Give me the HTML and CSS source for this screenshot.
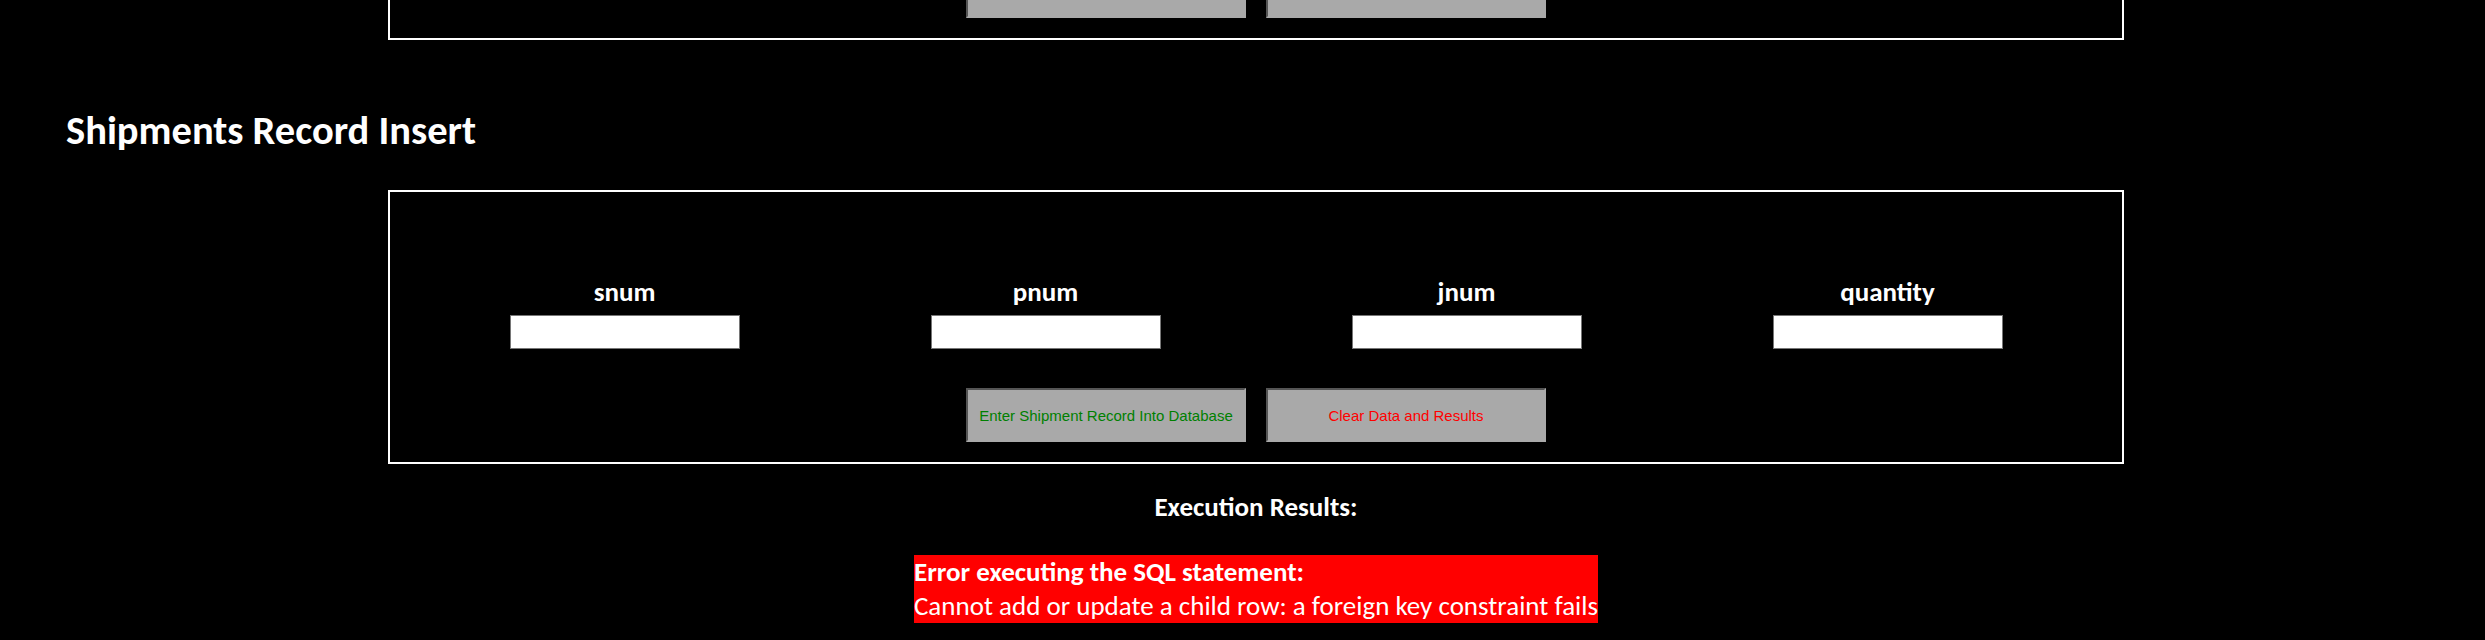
FILE: index.html
```html
<!DOCTYPE html>
<html lang="en">
  <head>
    <meta charset="UTF-8" />
    <meta name="viewport" content="width=device-width, initial-scale=1.0" />
    <title>Project 3 - Shipments Record Insert</title>
    <link rel="stylesheet" href="styles.css">
  </head>
  <body>
    <div class="page">
      <!-- previous form, scrolled mostly out of view -->
      <div class="panel panel-prev">
        <div class="actions">
          <button type="button" class="btn btn-submit" aria-label="Enter Part Record Into Database"></button>
          <button type="button" class="btn btn-clear" aria-label="Clear Data and Results"></button>
        </div>
      </div>

      <h1>Shipments Record Insert</h1>

      <form class="panel" action="#" method="post">
        <div class="fields">
          <div class="field">
            <label for="snum">snum</label>
            <input type="text" id="snum" name="snum" />
          </div>
          <div class="field">
            <label for="pnum">pnum</label>
            <input type="text" id="pnum" name="pnum" />
          </div>
          <div class="field">
            <label for="jnum">jnum</label>
            <input type="text" id="jnum" name="jnum" />
          </div>
          <div class="field">
            <label for="quantity">quantity</label>
            <input type="text" id="quantity" name="quantity" />
          </div>
        </div>
        <div class="actions">
          <button type="submit" class="btn btn-submit">Enter Shipment Record Into Database</button>
          <button type="reset" class="btn btn-clear">Clear Data and Results</button>
        </div>
      </form>

      <div class="results">
        <h3>Execution Results:</h3>
        <div class="result-box error">
          <strong>Error executing the SQL statement:</strong><br />
          Cannot add or update a child row: a foreign key constraint fails
        </div>
      </div>
    </div>
  </body>
</html>
```

FILE: styles.css
```css
body {
  margin: 0;
  background: #000;
  color: #fff;
  font-family: Calibri, Carlito, Lato, sans-serif;
}

.page {
  padding-left: 27px;
}

.panel {
  box-sizing: border-box;
  width: 1736px;
  margin: 0 auto;
  border: 2px solid #fff;
  padding: 84px 24px 20px;
}

.panel-prev {
  margin-top: -58px;
  padding-top: 20px;
}

h1 {
  font-size: 40.5px;
  line-height: 48px;
  font-weight: bold;
  margin: 66px 0 36px 39px;
}

.fields {
  display: grid;
  grid-template-columns: repeat(4, 1fr);
}

.field {
  display: flex;
  flex-direction: column;
  align-items: center;
}

.field label {
  font-size: 27px;
  line-height: 32px;
  font-weight: bold;
  margin-bottom: 7px;
}

.field input {
  box-sizing: border-box;
  width: 230px;
  height: 34px;
  border: 1px solid #767676;
  background: #fff;
}

.actions {
  display: flex;
  justify-content: center;
  gap: 20px;
  margin-top: 39px;
}

.panel-prev .actions {
  margin-top: 0;
}

.btn {
  box-sizing: border-box;
  width: 280px;
  height: 54px;
  background: #a9a9a9;
  border: 2px solid #a9a9a9;
  border-top-color: #555;
  border-left-color: #555;
  font-family: "Liberation Sans", Arial, sans-serif;
  font-size: 15px;
  padding: 0;
}

.btn-submit {
  color: #008000;
}

.btn-clear {
  color: #ff0000;
}

.results {
  text-align: center;
  margin-top: 27px;
}

.results h3 {
  font-size: 27px;
  line-height: 32px;
  font-weight: bold;
  margin: 0 0 32px;
}

.result-box {
  display: inline-block;
  text-align: left;
  font-size: 27px;
  line-height: 34px;
}

.error {
  background: #ff0000;
  color: #fff;
}
```
